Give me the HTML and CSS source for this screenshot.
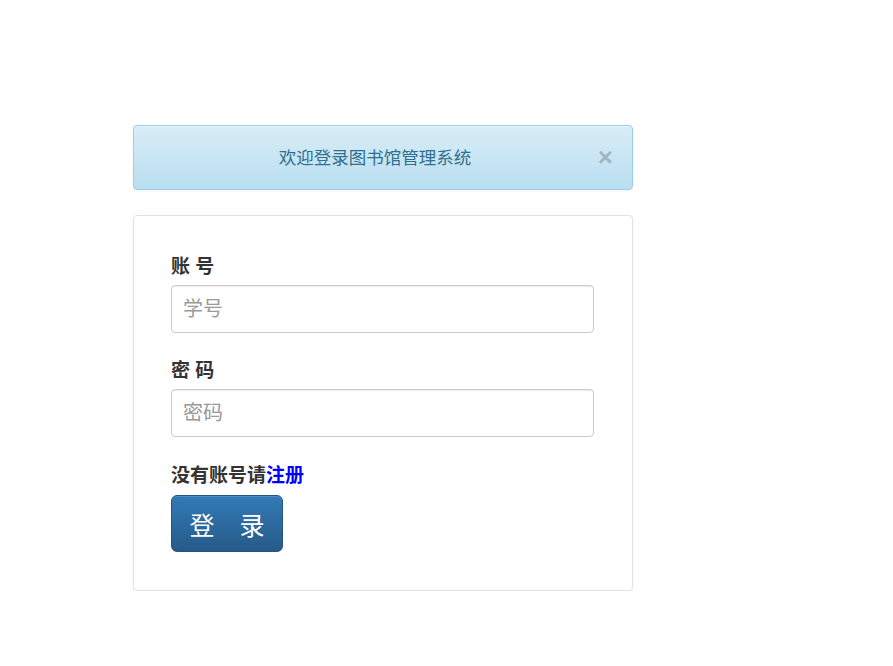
FILE: index.html
```html
<!DOCTYPE html>
<html lang="zh-CN">
<head>
    <meta charset="UTF-8">
    <meta name="viewport" content="width=device-width, initial-scale=1.0">
    <title>图书馆管理系统</title>
    <link rel="stylesheet" href="styles.css">
</head>
<body>
    <div class="login-wrap">
        <div class="alert">
            欢迎登录图书馆管理系统
            <button class="close" type="button">&times;</button>
        </div>
        <form class="login-panel">
            <div class="form-group">
                <label for="sno">账 号</label>
                <input type="text" id="sno" class="form-control" placeholder="学号">
            </div>
            <div class="form-group">
                <label for="pwd">密 码</label>
                <input type="password" id="pwd" class="form-control" placeholder="密码">
            </div>
            <p class="register">没有账号请<a href="#">注册</a></p>
            <button type="submit" class="btn-login">登　录</button>
        </form>
    </div>
</body>
</html>
```

FILE: styles.css
```css
*{
    box-sizing: border-box;
}
body{
    margin: 0;
    background-color: #fff;
    font-family: "Liberation Sans", "Noto Sans CJK SC", sans-serif;
    font-size: 14px;
    color: #333;
}
.login-wrap{
    width: 500px;
    margin-left: 133px;
    padding-top: 125px;
}
.alert{
    position: relative;
    height: 65px;
    padding: 0 33px 2px 17px;
    display: flex;
    align-items: center;
    justify-content: center;
    font-size: 17.5px;
    color: #31708f;
    background-image: linear-gradient(to bottom, #d9edf7 0%, #b9def0 100%);
    border: 1px solid #9acfea;
    border-radius: 4px;
    box-shadow: inset 0 1px 0 rgba(255,255,255,.25), 0 1px 2px rgba(0,0,0,.05);
    margin-bottom: 25px;
}
.close{
    position: absolute;
    right: 19px;
    top: 18px;
    padding: 0;
    border: none;
    background: transparent;
    font-family: "Liberation Sans", sans-serif;
    font-size: 26px;
    font-weight: bold;
    line-height: 1;
    color: #000;
    opacity: .2;
    cursor: pointer;
}
.login-panel{
    border: 1px solid #e2e2e2;
    border-radius: 4px;
    box-shadow: 0 1px 2px rgba(0,0,0,.06);
    padding: 38px 38px 38px 37px;
}
.form-group{
    margin-bottom: 25px;
}
label{
    display: block;
    font-size: 19px;
    font-weight: bold;
    line-height: 26px;
    margin-bottom: 5px;
}
.form-control{
    display: block;
    width: 100%;
    height: 48px;
    padding: 0 11px;
    font-family: inherit;
    font-size: 20px;
    color: #555;
    border: 1px solid #ccc;
    border-radius: 4px;
    box-shadow: inset 0 1px 1px rgba(0,0,0,.075);
}
.form-control::placeholder{
    color: #999;
}
.register{
    margin: 0 0 6px;
    padding-top: 1px;
    font-size: 19px;
    font-weight: bold;
    line-height: 26px;
}
.register a{
    color: #00f;
    text-decoration: none;
}
.btn-login{
    display: block;
    width: 112px;
    height: 57px;
    padding: 0;
    font-family: inherit;
    font-size: 25px;
    color: #fff;
    background-image: linear-gradient(to bottom, #337ab7 0%, #265a88 100%);
    border: 1px solid #245580;
    border-radius: 6px;
    box-shadow: inset 0 1px 0 rgba(255,255,255,.15);
    cursor: pointer;
}
```
